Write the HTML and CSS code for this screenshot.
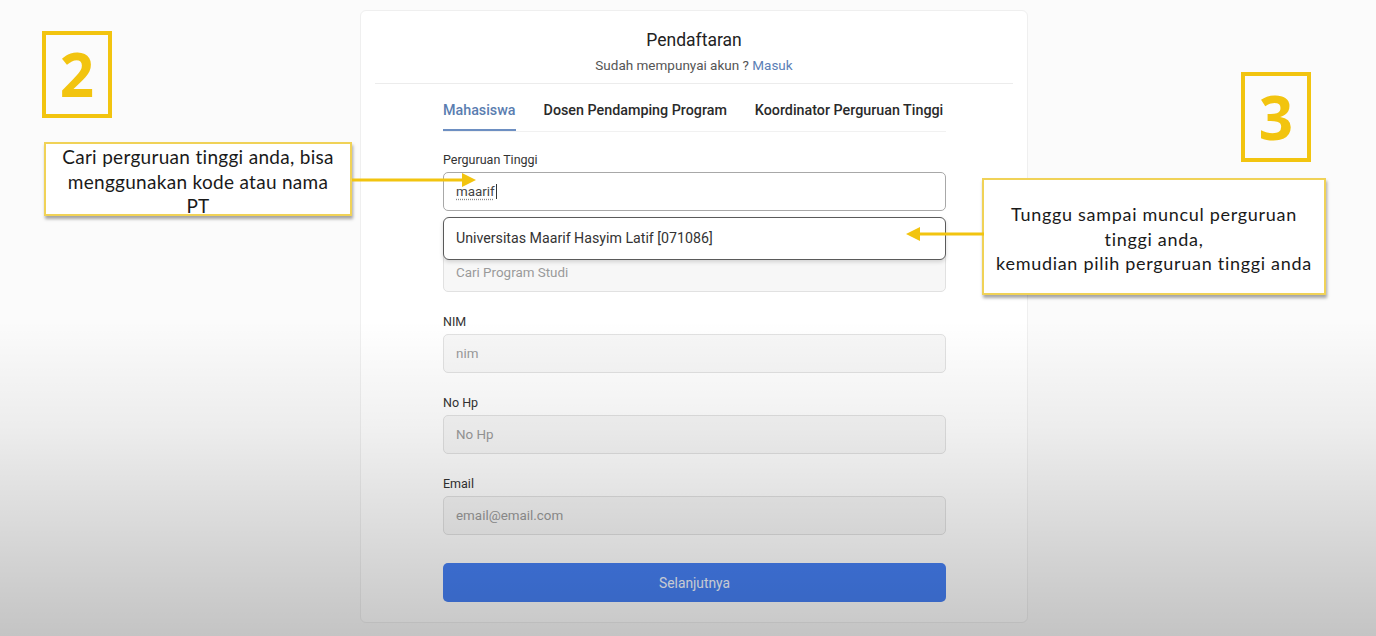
FILE: index.html
```html
<!DOCTYPE html>
<html lang="id">
<head>
    <meta charset="UTF-8">
    <meta name="viewport" content="width=device-width, initial-scale=1.0">
    <title>Pendaftaran</title>
    <link rel="stylesheet" href="styles.css">
</head>
<body>
    <div class="card">
        <div class="card-header">
            <h1>Pendaftaran</h1>
            <p class="sub">Sudah mempunyai akun ? <a href="#">Masuk</a></p>
        </div>

        <div class="card-body">
            <div class="tabs">
                <span class="tab active">Mahasiswa</span>
                <span class="tab">Dosen Pendamping Program</span>
                <span class="tab">Koordinator Perguruan Tinggi</span>
            </div>

            <div class="field first">
                <label>Perguruan Tinggi</label>
                <div class="search">
                    <div class="input filled"><span class="typed">maarif</span><span class="caret"></span></div>
                    <!-- hasil pencarian -->
                    <div class="dropdown">Universitas Maarif Hasyim Latif [071086]</div>
                </div>
            </div>

            <div class="input prodi">Cari Program Studi</div>

            <div class="field">
                <label>NIM</label>
                <div class="input">nim</div>
            </div>
            <div class="field">
                <label>No Hp</label>
                <div class="input">No Hp</div>
            </div>
            <div class="field">
                <label>Email</label>
                <div class="input">email@email.com</div>
            </div>

            <button class="btn">Selanjutnya</button>
        </div>
    </div>

    <!-- lapisan gelap dari video -->
    <div class="shade"></div>

    <!-- anotasi -->
    <div class="step step-2">2</div>
    <div class="note note-2">Cari perguruan tinggi anda, bisa<br>menggunakan kode atau nama<br>PT</div>
    <svg class="arrow arrow-2" width="130" height="16" viewBox="0 0 130 16">
        <line x1="0" y1="8" x2="112" y2="8" stroke="#f2c40f" stroke-width="3"/>
        <polygon points="110,1 124,8 110,15" fill="#f2c40f"/>
    </svg>

    <div class="step step-3">3</div>
    <div class="note note-3">Tunggu sampai muncul perguruan<br>tinggi anda,<br>kemudian pilih perguruan tinggi anda</div>
    <svg class="arrow arrow-3" width="80" height="16" viewBox="0 0 80 16">
        <line x1="14" y1="8" x2="80" y2="8" stroke="#f2c40f" stroke-width="3"/>
        <polygon points="16,1 2,8 16,15" fill="#f2c40f"/>
    </svg>
</body>
</html>
```

FILE: styles.css
```css
body {
    margin: 0;
    padding: 10px 0 0;
    background-color: #fbfbfb;
    font-family: Roboto, "Liberation Sans", sans-serif;
    color: #222;
    height: 626px;
    overflow: hidden;
}

.card {
    width: 668px;
    margin-left: 360px;
    background-color: #fff;
    border: 1px solid #efefef;
    border-radius: 6px;
    box-sizing: border-box;
}

.card-header {
    margin: 0 14px;
    padding: 17px 0 9px;
    border-bottom: 1px solid #ececec;
    text-align: center;
}

h1 {
    margin: 0 0 4px;
    font-size: 17.5px;
    font-weight: 400;
    line-height: 24px;
    color: #222;
}

.sub {
    margin: 0;
    font-size: 13.5px;
    line-height: 18px;
    color: #555;
}

.sub a {
    color: #5b7fb6;
    text-decoration: none;
}

.card-body {
    padding: 0 81px 20px 82px;
}

.tabs {
    display: flex;
    gap: 28px;
    border-bottom: 1px solid #f1f1f1;
    white-space: nowrap;
}

.tab {
    padding: 16px 0 9px;
    font-size: 14.3px;
    font-weight: 500;
    line-height: 20px;
    color: #2a2a2a;
    border-bottom: 2px solid transparent;
}

.tab.active {
    color: #5a7db0;
    border-bottom-color: #6d8fc2;
}

.field label {
    display: block;
    margin-top: 21px;
    font-size: 12.5px;
    line-height: 18px;
    color: #333;
}

.field.first label {
    margin-top: 19px;
}

.input {
    box-sizing: border-box;
    height: 39px;
    margin-top: 3px;
    padding: 0 12px;
    border: 1px solid #e1e1e1;
    border-radius: 5px;
    background-color: #f7f7f7;
    font-size: 13.4px;
    line-height: 37px;
    color: #9a9a9a;
}

.input.filled {
    display: flex;
    align-items: center;
    background-color: #fff;
    border-color: #a8a8a8;
    color: #444;
}

.typed {
    line-height: 16px;
    text-decoration: underline dotted #8a8a8a;
    text-underline-offset: 3px;
}

.caret {
    width: 1px;
    height: 15px;
    margin-left: 1px;
    background-color: #333;
}

.input.prodi {
    margin-top: 42px;
}

.search {
    position: relative;
}

.dropdown {
    position: absolute;
    left: 0;
    right: 0;
    top: 45px;
    z-index: 2;
    box-sizing: border-box;
    height: 43px;
    padding: 0 12px;
    border: 1px solid #5a5a5a;
    border-radius: 6px;
    background-color: #fff;
    box-shadow: 0 2px 4px rgba(0, 0, 0, 0.15);
    font-size: 14.2px;
    line-height: 41px;
    color: #333;
}

.btn {
    display: block;
    width: 100%;
    height: 39px;
    margin-top: 28px;
    border: none;
    border-radius: 5px;
    background-color: #4680f4;
    color: #f2f6ff;
    font-family: Roboto, "Liberation Sans", sans-serif;
    font-size: 13.8px;
}

.shade {
    position: absolute;
    left: 0;
    top: 0;
    width: 1376px;
    height: 636px;
    pointer-events: none;
    z-index: 3;
    background: linear-gradient(to bottom, rgba(0, 0, 0, 0) 0, rgba(0, 0, 0, 0) 320px, rgba(0, 0, 0, 0.06) 430px, rgba(0, 0, 0, 0.22) 636px);
}

/* anotasi */
.step {
    position: absolute;
    z-index: 4;
    box-sizing: border-box;
    border: 4px solid #f2c40f;
    color: #f2c40f;
    font-family: "Open Sans", Lato, sans-serif;
    font-weight: 700;
    font-size: 60px;
    text-align: center;
}

.step-2 {
    left: 42px;
    top: 31px;
    width: 70px;
    height: 87px;
    line-height: 79px;
}

.step-3 {
    left: 1241px;
    top: 72px;
    width: 70px;
    height: 90px;
    line-height: 82px;
}

.note {
    position: absolute;
    z-index: 4;
    box-sizing: border-box;
    background-color: #fff;
    border: 2px solid #f0d257;
    box-shadow: 1px 3px 3px rgba(0, 0, 0, 0.35);
    font-family: Lato, "Open Sans", sans-serif;
    color: #1a1a1a;
    text-align: center;
}

.note-2 {
    left: 44px;
    top: 142px;
    width: 308px;
    height: 74px;
    padding-top: 1px;
    font-size: 19px;
    letter-spacing: 0.3px;
    line-height: 24.5px;
}

.note-3 {
    left: 982px;
    top: 178px;
    width: 344px;
    height: 117px;
    padding-top: 22px;
    font-size: 18px;
    letter-spacing: 0.7px;
    line-height: 24.5px;
}

.arrow {
    position: absolute;
    z-index: 4;
}

.arrow-2 {
    left: 352px;
    top: 172px;
}

.arrow-3 {
    left: 904px;
    top: 226px;
}
```
